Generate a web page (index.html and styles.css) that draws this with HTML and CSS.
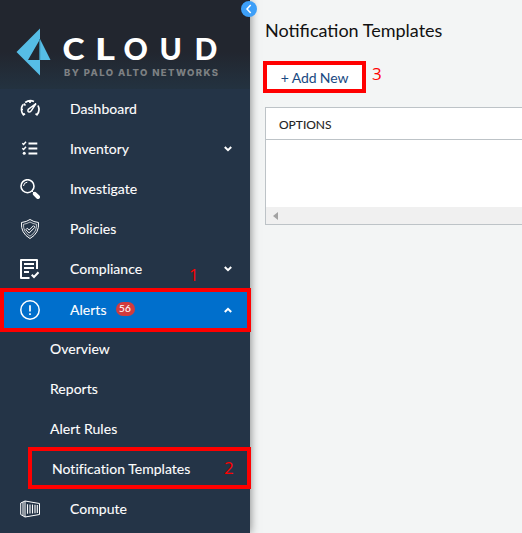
FILE: index.html
```html
<!DOCTYPE html>
<html lang="en">
<head>
<meta charset="utf-8">
<title>Notification Templates</title>
<link rel="stylesheet" href="styles.css">
</head>
<body>
<div class="app">
  <aside class="sidebar">
    <header class="brand">
      <svg class="logo" width="250" height="89" viewBox="0 0 250 89">
        <path fill="#56bde6" fill-rule="evenodd" d="M40 28.500V75.500L16.500 52ZM39 41V60H28Z"/>
        <path fill="#56bde6" d="M40 39L50.500 60H40Z"/>
        <path stroke="#22566f" stroke-width=".7" d="M39.700 39V60"/>
        <g class="logo-name"><text x="62.500" y="60" textLength="22" lengthAdjust="spacingAndGlyphs">C</text><text x="95" y="60" textLength="20" lengthAdjust="spacingAndGlyphs">L</text><text x="123.500" y="60">O</text><text x="159.500" y="60">U</text><text x="194.500" y="60">D</text></g>
        <text class="logo-sub" x="64" y="76" textLength="154" lengthAdjust="spacing">BY PALO ALTO NETWORKS</text>
      </svg>
    </header>
    <nav class="menu">
      <a class="item"><svg class="icon" viewBox="0 0 20 20"><path stroke-width="1.700" d="M3.800 16.500A9 9 0 0 1 3 5.500M5.200 3.500A9 9 0 0 1 14 2.500M18 6.500A9 9 0 0 1 16.500 16.500M10 1.500V4M3.700 4.700L5.500 6.500M1 10.500H3M3 16L5 14.800M17.200 15.800L15.500 14.800"/><path stroke-width="1.500" d="M16 4.500L8.400 10.200Q7.200 12.600 9 13Q10.700 13.200 11.400 11.500Z"/></svg><span>Dashboard</span></a>
      <a class="item"><svg class="icon" viewBox="0 0 20 20"><path stroke-width="1.800" d="M8.500 4.500H17.300M8.500 9.500H17.300M8.500 14.500H17.300"/><path stroke-width="1.500" d="M2.300 4.200L3.600 5.500L6 2.700M2.300 9.200L3.600 10.500L6 7.700"/><circle class="solid" cx="4.200" cy="14.300" r="1.500"/></svg><span>Inventory</span><svg class="chevron" viewBox="0 0 8 6"><path d="M.8 1L4 4.200L7.200 1"/></svg></a>
      <a class="item"><svg class="icon" viewBox="0 0 20 20"><circle cx="7.500" cy="7.200" r="6.500" stroke-width="1.600"/><path stroke-width="1" d="M3.500 7Q3.700 3.500 7.300 3.200M12 12L14 14"/><path stroke-width="4" stroke-linecap="round" d="M14.800 14.800L18 18"/></svg><span>Investigate</span></a>
      <a class="item"><svg class="icon" viewBox="0 0 20 20"><path stroke-width="1" d="M10 .5Q13.500 3 18.500 3.500Q19.500 14 10 19.500Q.5 14 1.500 3.500Q6.500 3 10 .5Z"/><path stroke-width=".7" d="M10 3Q13 4.800 16.500 5.300Q17 12.800 10 17.200Q3 12.800 3.500 5.300Q7 4.800 10 3Z"/><path stroke-width="1" d="M5.800 10.700L7.300 9.200L9.200 11L13.500 6.700L15 8.200L9.200 14Z"/></svg><span>Policies</span></a>
      <a class="item"><svg class="icon" viewBox="0 0 20 20"><path stroke-width="2" stroke-linejoin="round" d="M17 10V1H1V19H9.500"/><path stroke-width="2" d="M4 5H14M4 9H14M4 13H9M11.700 15.800L14 18L18.500 13.300"/></svg><span>Compliance</span><svg class="chevron" viewBox="0 0 8 6"><path d="M.8 1L4 4.200L7.200 1"/></svg><b class="note note-one">1</b></a>
      <a class="item active"><svg class="icon" viewBox="0 0 20 20"><circle cx="10" cy="10" r="9.200" stroke-width="1.500"/><path stroke-width="1.700" d="M10 5.200V11.500M10 13.200V15"/></svg><span>Alerts</span><span class="badge">56</span><svg class="chevron" viewBox="0 0 8 6"><path d="M.8 5L4 1.800L7.200 5"/></svg></a>
      <a class="sub">Overview</a>
      <a class="sub">Reports</a>
      <a class="sub">Alert Rules</a>
      <a class="sub current">Notification Templates<b class="note note-two">2</b></a>
      <a class="item"><svg class="icon" viewBox="0 0 20 20"><path stroke-width="1" d="M.7 4L5 2L19.500 4.500V15.500L5 18L.7 15.500ZM5 2V18M3 3V16.800"/><path stroke-width="1.100" d="M7.500 5.200V14.800M10 5.400V14.600M12.500 5.600V14.400M15 5.800V14.200M17.300 6V14"/></svg><span>Compute</span></a>
    </nav>
    <button class="collapse" aria-label="Collapse"><svg width="16" height="16" viewBox="0 0 16 16"><path d="M9.700 4L6 8L9.700 12"/></svg></button>
  </aside>
  <main class="content">
    <h1>Notification Templates</h1>
    <div class="actions"><button class="add">+ Add New</button><b class="note">3</b></div>
    <section class="table">
      <div class="table-head">OPTIONS</div>
      <div class="table-body"></div>
      <div class="scrollbar"><i class="arrow"></i></div>
    </section>
  </main>
</div>
</body>
</html>
```
FILE: styles.css
```css
* { box-sizing: border-box; }
body { margin: 0; font-family: Lato, sans-serif; font-size: 14px; }
.app { display: flex; width: 522px; height: 533px; overflow: hidden; background: #f3f5f5; }
.sidebar { position: relative; flex: 0 0 250px; min-width: 0; background: #243447; color: #fff; box-shadow: 0 0 9px rgba(0, 0, 0, .5); }
.brand { height: 89px; background: linear-gradient(#22262f 0, #22262f 52px, #233240 89px); }
.logo { display: block; }
.logo-name { font: 900 30px Lato, sans-serif; fill: #fff; }
.logo-sub { font: 800 9.500px Inter, sans-serif; fill: #7d8083; }
.menu { display: flex; flex-direction: column; }
.item { position: relative; display: flex; align-items: center; height: 40px; padding: 0 18px 0 20px; }
.icon { width: 20px; height: 20px; margin-right: 30px; fill: none; stroke: #fff; }
.item > span { padding-bottom: 2px; }
.item > span, .sub { letter-spacing: .03px; -webkit-text-stroke: .1px #fff; }
.solid { fill: #fff; stroke: none; }
.chevron { width: 8px; height: 6px; margin-left: auto; fill: none; stroke: #fff; stroke-width: 2; }
.active { width: 251px; height: 44px; margin: -1px 0 -3px; padding: 0 15px 0 16px; border: 4px solid #f00; background: #006fcc; }
.item > .badge { width: 19px; height: 14px; margin: -2px 0 0 9px; padding: 0; border-radius: 7px; background: #d13b3d; font-size: 10px; line-height: 13px; text-align: center; letter-spacing: .3px; }
.sub { position: relative; height: 40px; padding-left: 50px; line-height: 40px; }
.current { width: 223px; height: 42px; margin: -2px 0 0 28px; padding-left: 20px; border: 4px solid #f00; line-height: 36px; }
.note { color: #f00; font: 400 17px/20px "Open Sans", sans-serif; -webkit-text-stroke: 0; }
.note-one { position: absolute; left: 189px; top: 16px; }
.note-two { position: absolute; left: 192px; top: 7px; }
.collapse { position: absolute; left: 241px; top: 1px; width: 16px; height: 16px; padding: 0; border: 0; border-radius: 50%; background: #3d9ff8; }
.collapse svg { display: block; fill: none; stroke: #fff; stroke-width: 1.500; }
.content { flex: 1; min-width: 0; padding: 18px 0 0 13px; }
h1 { margin: 0 0 19px 2px; font-size: 18px; line-height: 24px; font-weight: 400; color: #111; }
.actions { display: flex; align-items: center; gap: 6px; height: 32px; margin-bottom: 14px; }
.actions .note { position: relative; top: -3px; }
.add { width: 103px; height: 32px; padding: 2px 0 0; border: 4px solid #f00; background: #fff; color: #194982; font: 14px/22px Lato, sans-serif; letter-spacing: -.1px; }
.table { width: 280px; height: 118px; margin-left: 2px; border: 1px solid #bdc3c7; background: #fff; }
.table-head { height: 32px; padding-left: 13px; border-bottom: 1px solid #bdc3c7; color: #222; font-size: 12px; line-height: 34px; -webkit-text-stroke: .1px #222; }
.table-body { height: 67px; }
.scrollbar { display: flex; align-items: center; height: 17px; padding-left: 7px; background: #f0f0f0; }
.arrow { border: 4px solid transparent; border-left: 0; border-right: 5px solid #a3a3a3; }
```
